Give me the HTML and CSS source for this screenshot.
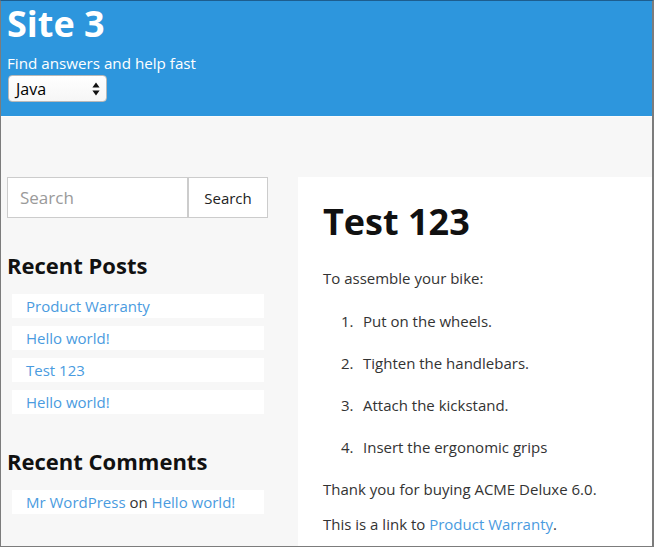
FILE: index.html
```html
<!DOCTYPE html>
<html lang="en">
<head>
<meta charset="utf-8">
<title>Site 3</title>
<link rel="stylesheet" href="styles.css">
</head>
<body>
<div class="frame">
  <header class="site-header">
    <h1 class="site-title">Site 3</h1>
    <p class="site-tagline">Find answers and help fast</p>
    <div class="lang-select">
      <span class="lang-value">Java</span>
      <svg class="lang-arrows" width="8" height="14" viewBox="0 0 8 14"><path d="M4 0.5 L7.6 5.5 L0.4 5.5 Z M4 13.5 L7.6 8.5 L0.4 8.5 Z" fill="#111"/></svg>
    </div>
  </header>
  <div class="content">
    <aside class="sidebar">
      <form class="search-form">
        <input class="search-input" type="text" placeholder="Search">
        <button class="search-button" type="button">Search</button>
      </form>
      <h2 class="widget-title">Recent Posts</h2>
      <ul class="widget-list">
        <li class="widget-item"><a href="#">Product Warranty</a></li>
        <li class="widget-item"><a href="#">Hello world!</a></li>
        <li class="widget-item"><a href="#">Test 123</a></li>
        <li class="widget-item"><a href="#">Hello world!</a></li>
      </ul>
      <h2 class="widget-title">Recent Comments</h2>
      <ul class="widget-list">
        <li class="widget-item"><a href="#">Mr WordPress</a> on <a href="#">Hello world!</a></li>
      </ul>
    </aside>
    <main class="post">
      <h1 class="post-title">Test 123</h1>
      <p class="post-text">To assemble your bike:</p>
      <ol class="post-steps">
        <li>Put on the wheels.</li>
        <li>Tighten the handlebars.</li>
        <li>Attach the kickstand.</li>
        <li>Insert the ergonomic grips</li>
      </ol>
      <p class="post-text">Thank you for buying ACME Deluxe 6.0.</p>
      <p class="post-text">This is a link to <a href="#">Product Warranty</a>.</p>
    </main>
  </div>
</div>
</body>
</html>
```
FILE: styles.css
```css
* { box-sizing: border-box; }
html, body { margin: 0; padding: 0; }
body {
  font-family: "Open Sans", "Noto Sans", sans-serif;
  color: #333;
  overflow: hidden;
}
.frame {
  height: 547px;
  border-top: 1px solid #1d5d8e;
  border-left: 1px solid #7c7c7c;
  border-right: 2px solid #7c7c7c;
  border-bottom: 1px solid #7c7c7c;
  background: #f7f7f7;
  overflow: hidden;
}
a { color: #4a9be0; text-decoration: none; }

.site-header {
  height: 116px;
  background: #2d96dd;
  border-bottom: 1px solid #fcfcfc;
  padding: 0 0 0 6px;
  color: #fff;
}
.site-title {
  margin: 0;
  font-size: 36px;
  line-height: 45px;
  font-weight: 700;
}
.site-tagline {
  margin: 6px 0 0;
  font-size: 15.2px;
  line-height: 22px;
}
.lang-select {
  margin: 1px 0 0 1px;
  width: 99px;
  height: 27px;
  background: linear-gradient(#fff, #f6f6f6);
  border: 1px solid #b9b9b9;
  border-radius: 4px;
  display: flex;
  align-items: center;
  justify-content: space-between;
  padding: 0 6px 0 7px;
  color: #000;
  font-size: 16px;
}
.lang-arrows { display: block; }

.content {
  display: flex;
  align-items: flex-start;
  padding-top: 60px;
  height: 430px;
}
.sidebar {
  width: 261px;
  margin-left: 6px;
  flex: none;
}
.search-form {
  display: flex;
  height: 41px;
}
.search-input {
  width: 182px;
  height: 41px;
  border: 1px solid #ccc;
  border-right: 2px solid #ccc;
  background: #fff;
  font-family: inherit;
  font-size: 17px;
  padding: 0 12px;
  color: #333;
  outline: none;
}
.search-input::placeholder { color: #9a9a9a; }
.search-button {
  width: 79px;
  height: 41px;
  border: 1px solid #ccc;
  border-left: none;
  background: #fff;
  font-family: inherit;
  font-size: 15px;
  color: #222;
  padding: 0;
}
.widget-title {
  margin: 32px 0 0;
  font-size: 22px;
  line-height: 30px;
  font-weight: 700;
  color: #111;
}
.widget-list {
  list-style: none;
  margin: 14px 0 0;
  padding: 0;
  display: flex;
  flex-direction: column;
  gap: 8px;
}
.widget-item {
  margin-left: 5px;
  width: 252px;
  height: 24px;
  background: #fff;
  padding-left: 14px;
  font-size: 15px;
  line-height: 24px;
  color: #333;
  white-space: nowrap;
}

.post {
  flex: 1;
  margin-left: 30px;
  background: #fff;
  height: 370px;
  padding: 23px 0 0 25px;
  font-size: 15px;
  line-height: 24px;
}
.post-title {
  margin: 0 0 22px;
  font-size: 36px;
  line-height: 44px;
  font-weight: 700;
  color: #111;
}
.post-text {
  margin: 0 0 11px;
}
.post-steps {
  margin: 19px 0 0;
  padding-left: 18px;
  list-style: none;
  counter-reset: step;
}
.post-steps li {
  margin-bottom: 18px;
  counter-increment: step;
}
.post-steps li::before {
  content: counter(step) ".";
  display: inline-block;
  width: 22px;
}
```
